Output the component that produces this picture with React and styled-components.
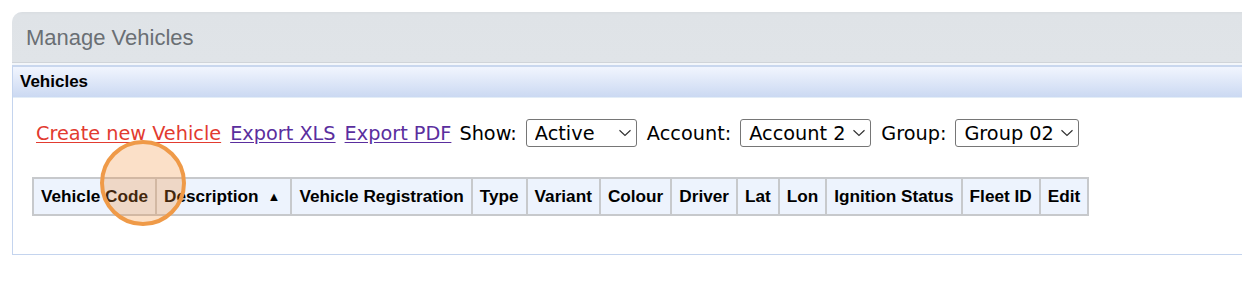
import React from 'react';
import styled, { createGlobalStyle } from 'styled-components';

const GlobalStyle = createGlobalStyle`
  body {
    margin: 0;
    background: #ffffff;
    font-family: "Liberation Sans", Arial, sans-serif;
    overflow: hidden;
  }
`;

const Page = styled.div`
  position: relative;
  padding: 12px 0 0 12px;
  height: 290px;
  box-sizing: border-box;
`;

const Panel = styled.div`
  margin-right: -20px;
  border-top-left-radius: 10px;
  overflow: hidden;
  background: #f3f6fa;
`;

const PanelHeader = styled.div`
  height: 51px;
  display: flex;
  align-items: center;
  padding: 2px 0 0 14px;
  background: linear-gradient(#d9dde1 0, #dfe3e7 3px, #e0e4e8 100%);
  border-bottom: 1px solid #d0d4d9;
  font-size: 22px;
  color: #6a6f74;
  box-sizing: border-box;
`;

const Box = styled.div`
  margin-top: 2px;
  border-top: 2px solid #c9d7ee;
  border-left: 1px solid #c4d4ee;
  border-bottom: 1px solid #c4d4ee;
  background: #ffffff;
`;

const BoxTitle = styled.div`
  height: 30px;
  display: flex;
  align-items: center;
  padding-left: 7px;
  background: linear-gradient(#f1f5fe, #cbd9f2);
  border-bottom: 1px solid #e3edf7;
  font-size: 17px;
  font-weight: bold;
  color: #000000;
`;

const BoxBody = styled.div`
  padding: 21px 0 38px 19px;
`;

const Toolbar = styled.div`
  display: flex;
  align-items: center;
  gap: 9px;
  padding-left: 4px;
  height: 28px;
  font-family: "DejaVu Sans", Verdana, sans-serif;
  font-size: 19.3px;
  color: #000000;
`;

const Link = styled.a`
  color: ${(p) => (p.$visited ? '#5a2e9e' : '#e23b30')};
  text-decoration: underline;
  text-underline-offset: 2px;
  cursor: pointer;
`;

const Label = styled.span`
  margin-left: -1px;
`;

const SelectWrap = styled.label`
  display: inline-flex;
  align-items: center;
  box-sizing: border-box;
  height: 28px;
  width: ${(p) => p.$w}px;
  border: 1px solid #767676;
  border-radius: 3px;
  padding: 0 4px 0 8px;
  margin-right: 2px;
  background: #ffffff;
`;

const Select = styled.select`
  appearance: none;
  border: none;
  background: transparent;
  font-family: "DejaVu Sans", Verdana, sans-serif;
  font-size: 19.3px;
  color: #000000;
  padding: 0;
  flex: 1;
  min-width: 0;
  outline: none;
`;

const Chevron = () => (
  <svg width="14" height="8" viewBox="0 0 14 8">
    <path d="M1.5 1.2 L7 6.5 L12.5 1.2" fill="none" stroke="#333" strokeWidth="1.2" />
  </svg>
);

const Table = styled.table`
  margin-top: 30px;
  border-collapse: collapse;
  border: 2px solid #c7c9cc;
`;

const Th = styled.th`
  height: 35px;
  padding: 0 7px;
  background: #edf3fd;
  border: 2px solid #c7c9cc;
  font-size: 17.2px;
  font-weight: bold;
  color: #000000;
  white-space: nowrap;
  text-align: left;
`;

const SortArrow = styled.span`
  font-size: 13px;
  margin-left: 9px;
  margin-right: 3px;
  vertical-align: 1px;
`;

const Highlight = styled.div`
  position: absolute;
  left: 100px;
  top: 140px;
  width: 86px;
  height: 86px;
  box-sizing: border-box;
  border-radius: 50%;
  border: 4px solid #ef9a48;
  background: rgba(240, 140, 50, 0.27);
  pointer-events: none;
`;

const columns = [
  'Vehicle Code',
  'Description',
  'Vehicle Registration',
  'Type',
  'Variant',
  'Colour',
  'Driver',
  'Lat',
  'Lon',
  'Ignition Status',
  'Fleet ID',
  'Edit',
];

const App = () => {
  return (
    <>
      <GlobalStyle />
      <Page>
        <Panel>
          <PanelHeader>Manage Vehicles</PanelHeader>
          <Box>
            <BoxTitle>Vehicles</BoxTitle>
            <BoxBody>
              <Toolbar>
                <Link>Create new Vehicle</Link>
                <Link $visited>Export XLS</Link>
                <Link $visited>Export PDF</Link>
                <Label>Show:</Label>
                <SelectWrap $w={111}>
                  <Select defaultValue="active">
                    <option value="active">Active</option>
                  </Select>
                  <Chevron />
                </SelectWrap>
                <Label>Account:</Label>
                <SelectWrap $w={131}>
                  <Select defaultValue="a2">
                    <option value="a2">Account 2</option>
                  </Select>
                  <Chevron />
                </SelectWrap>
                <Label>Group:</Label>
                <SelectWrap $w={124}>
                  <Select defaultValue="g02">
                    <option value="g02">Group 02</option>
                  </Select>
                  <Chevron />
                </SelectWrap>
              </Toolbar>
              <Table>
                <thead>
                  <tr>
                    {columns.map((c) => (
                      <Th key={c}>
                        {c}
                        {c === 'Description' && <SortArrow>▲</SortArrow>}
                      </Th>
                    ))}
                  </tr>
                </thead>
              </Table>
            </BoxBody>
          </Box>
        </Panel>
        <Highlight />
      </Page>
    </>
  );
};

export default App;
